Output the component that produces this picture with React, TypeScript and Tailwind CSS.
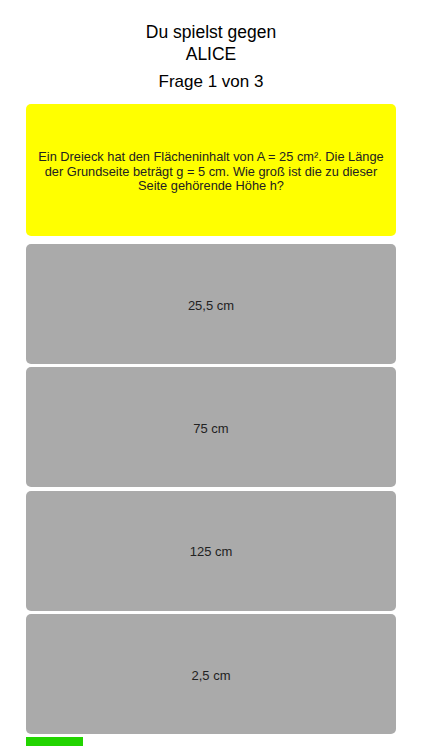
import React from "react";

const answers = ["25,5 cm", "75 cm", "125 cm", "2,5 cm"];

export default function App() {
  return (
    <main
      className="flex h-[750px] w-[422px] flex-col bg-white px-[26px] text-black"
      style={{ fontFamily: '"Liberation Sans", Arial, sans-serif' }}
    >
      <div className="pt-[21px] text-center text-[17.5px] leading-[22px]">
        <p>Du spielst gegen</p>
        <p>ALICE</p>
      </div>
      <p className="mt-[5px] text-center text-[17px] leading-[24px]">Frage 1 von 3</p>

      <div className="mt-[10px] flex h-[132px] items-center justify-center rounded-[5px] bg-[#ffff00] px-3 pt-[4px] text-center text-[12.8px] leading-[14.5px] text-[#222]">
        <p>
          Ein Dreieck hat den Flächeninhalt von A = 25 cm². Die Länge der Grundseite beträgt g = 5 cm. Wie groß ist die zu dieser Seite gehörende Höhe h?
        </p>
      </div>

      <div className="mt-[8px] flex flex-col gap-[3.3px]">
        {answers.map((a) => (
          <button
            key={a}
            className="flex h-[120px] items-center justify-center rounded-[5px] bg-[#aaaaaa] pt-[3px] text-[13px] text-[#222]"
          >
            {a}
          </button>
        ))}
      </div>

      <div className="mt-[3px] h-[9px] w-[57px] bg-[#22d400]" />
    </main>
  );
}
